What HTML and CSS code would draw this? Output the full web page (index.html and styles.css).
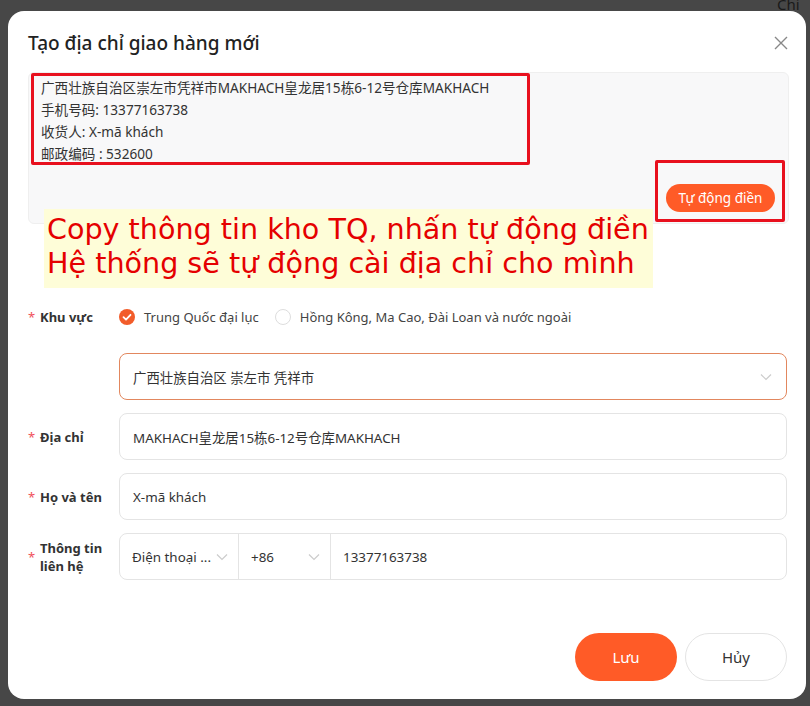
FILE: index.html
```html
<!DOCTYPE html>
<html lang="vi">
<head>
  <meta charset="UTF-8" />
  <meta name="viewport" content="width=device-width, initial-scale=1.0"/>
  <title>Tạo địa chỉ giao hàng mới</title>
  <link rel="stylesheet" href="styles.css">
</head>
<body>

<!-- faint page behind the overlay -->
<div class="backdrop-text top-right">Chi</div>

<div class="modal">
  <div class="modal-header">
    <h2>Tạo địa chỉ giao hàng mới</h2>
    <span class="close">
      <svg width="14" height="14" viewBox="0 0 14 14"><path d="M1 1L13 13M13 1L1 13" stroke="#888" stroke-width="1.4" fill="none"/></svg>
    </span>
  </div>

  <!-- paste box -->
  <div class="paste-box">
    <div class="paste-text">
      <div>广西壮族自治区崇左市凭祥市MAKHACH皇龙居15栋6-12号仓库MAKHACH</div>
      <div>手机号码: 13377163738</div>
      <div>收货人: X-mã khách</div>
      <div>邮政编码 : 532600</div>
    </div>
    <button class="autofill-btn">Tự động điền</button>

    <div class="mark mark-text"></div>
    <div class="mark mark-btn"></div>
    <div class="note">
      Copy thông tin kho TQ, nhấn tự động điền<br>
      Hệ thống sẽ tự động cài địa chỉ cho mình
    </div>
  </div>

  <!-- FORM -->
  <div class="form">
    <div class="row radio-row">
      <label class="label"><span class="req">*</span>Khu vực</label>
      <div class="radios">
        <span class="radio checked">
          <svg width="16" height="16" viewBox="0 0 16 16"><circle cx="8" cy="8" r="8" fill="#f25c2a"/><path d="M4.5 8.2L7 10.6L11.5 5.8" stroke="#fff" stroke-width="1.8" fill="none" stroke-linecap="round" stroke-linejoin="round"/></svg>
          Trung Quốc đại lục
        </span>
        <span class="radio">
          <svg width="16" height="16" viewBox="0 0 16 16"><circle cx="8" cy="8" r="7.5" fill="#fff" stroke="#ddd"/></svg>
          Hồng Kông, Ma Cao, Đài Loan và nước ngoài
        </span>
      </div>
    </div>

    <div class="row field-row">
      <label class="label"></label>
      <div class="field select active">
        <span>广西壮族自治区 崇左市 凭祥市</span>
        <svg class="chev" width="12" height="8" viewBox="0 0 12 8"><path d="M1 1.5L6 6.5L11 1.5" stroke="#ccc" stroke-width="1.2" fill="none"/></svg>
      </div>
    </div>

    <div class="row field-row">
      <label class="label"><span class="req">*</span>Địa chỉ</label>
      <div class="field">MAKHACH皇龙居15栋6-12号仓库MAKHACH</div>
    </div>

    <div class="row field-row">
      <label class="label"><span class="req">*</span>Họ và tên</label>
      <div class="field">X-mã khách</div>
    </div>

    <div class="row field-row">
      <label class="label two-line"><span class="req">*</span><span>Thông tin<br>liên hệ</span></label>
      <div class="field group">
        <div class="seg seg-type">
          <span>Điện thoại ...</span>
          <svg width="12" height="8" viewBox="0 0 12 8"><path d="M1 1.5L6 6.5L11 1.5" stroke="#ccc" stroke-width="1.2" fill="none"/></svg>
        </div>
        <div class="seg seg-code">
          <span>+86</span>
          <svg width="12" height="8" viewBox="0 0 12 8"><path d="M1 1.5L6 6.5L11 1.5" stroke="#ccc" stroke-width="1.2" fill="none"/></svg>
        </div>
        <div class="seg seg-num">13377163738</div>
      </div>
    </div>
  </div>

  <div class="actions">
    <button class="btn btn-save">Lưu</button>
    <button class="btn btn-cancel">Hủy</button>
  </div>
</div>

</body>
</html>
```

FILE: styles.css
```css
body {
  margin: 0;
  padding: 11px 4px 0 8px;
  height: 706px;
  box-sizing: border-box;
  overflow: hidden;
  background: #474747;
  font-family: "Noto Sans", "Noto Sans CJK SC", sans-serif;
  color: #333;
  position: relative;
}

.backdrop-text {
  position: absolute;
  color: #1a1a1a;
  font-size: 15px;
}

.top-right {
  top: -6px;
  left: 777px;
}

.modal {
  width: 798px;
  height: 688px;
  background: #fff;
  border-radius: 16px;
  padding: 0 17px 0 20px;
  box-sizing: border-box;
  position: relative;
}

.modal-header {
  display: flex;
  justify-content: space-between;
  align-items: center;
  padding-top: 20px;
  height: 44px;
  box-sizing: border-box;
  margin-bottom: 17px;
}

.modal-header h2 {
  margin: 0;
  font-size: 19px;
  font-weight: 500;
  color: #222;
  line-height: 24px;
}

.close {
  display: flex;
  margin-right: 1px;
}

.paste-box {
  position: relative;
  height: 150px;
  background: #f8f8f9;
  border: 1px solid #efefef;
  border-radius: 6px;
}

.paste-text {
  padding: 4px 12px;
  font-size: 13.6px;
  line-height: 22px;
  color: #333;
}

.autofill-btn {
  position: absolute;
  right: 13px;
  bottom: 11px;
  height: 28px;
  width: 109px;
  border: none;
  border-radius: 14px;
  background: #ff5b27;
  color: #fff;
  font-family: inherit;
  font-size: 13.5px;
  padding: 0;
}

.mark {
  position: absolute;
  border: 3px solid #e8101e;
  border-radius: 2px;
  box-sizing: border-box;
}

.mark-text {
  left: 2px;
  top: 0;
  width: 499px;
  height: 92px;
}

.mark-btn {
  left: 626px;
  top: 87px;
  width: 130px;
  height: 62px;
}

.note {
  position: absolute;
  left: 15px;
  top: 136px;
  width: 609px;
  height: 79px;
  background: #fefdd8;
  color: #e50000;
  font-family: "DejaVu Sans", sans-serif;
  font-size: 28.6px;
  line-height: 34px;
  padding: 3px 0 0 3px;
  box-sizing: border-box;
  white-space: nowrap;
}

.form {
  margin-top: 82px;
  padding-right: 2px;
}

.row {
  display: flex;
  align-items: center;
}

.label {
  width: 91px;
  flex: none;
  display: flex;
  align-items: center;
  font-size: 13px;
  font-weight: 700;
  color: #333;
}

.req {
  color: #f0505a;
  font-weight: 400;
  width: 12px;
}

.two-line {
  line-height: 18px;
}

.radio-row {
  height: 22px;
  margin-bottom: 25px;
}

.radios {
  display: flex;
  gap: 16px;
  font-size: 13px;
  color: #444;
}

.radio {
  display: flex;
  align-items: center;
  gap: 9px;
}

.field-row {
  margin-bottom: 13px;
}

.field {
  flex: 1;
  height: 47px;
  box-sizing: border-box;
  border: 1px solid #e4e4e4;
  border-radius: 8px;
  display: flex;
  align-items: center;
  padding: 0 13px;
  font-size: 13.4px;
  color: #333;
}

.select {
  justify-content: space-between;
  padding-right: 14px;
}

.select.active {
  border-color: #e2875e;
}

.group {
  padding: 0;
}

.seg {
  height: 100%;
  display: flex;
  align-items: center;
  justify-content: space-between;
  padding: 0 10px 0 12px;
  box-sizing: border-box;
  border-right: 1px solid #e4e4e4;
}

.seg-type {
  width: 119px;
}

.seg-code {
  width: 92px;
}

.seg-num {
  border-right: none;
  flex: 1;
}

.actions {
  display: flex;
  justify-content: flex-end;
  gap: 8px;
  margin-top: 53px;
  padding-right: 2px;
}

.btn {
  width: 102px;
  height: 48px;
  border-radius: 24px;
  font-family: inherit;
  font-size: 15px;
}

.btn-save {
  background: #ff5b27;
  color: #fff;
  border: none;
}

.btn-cancel {
  background: #fff;
  color: #333;
  border: 1px solid #e4e4e4;
}
```
